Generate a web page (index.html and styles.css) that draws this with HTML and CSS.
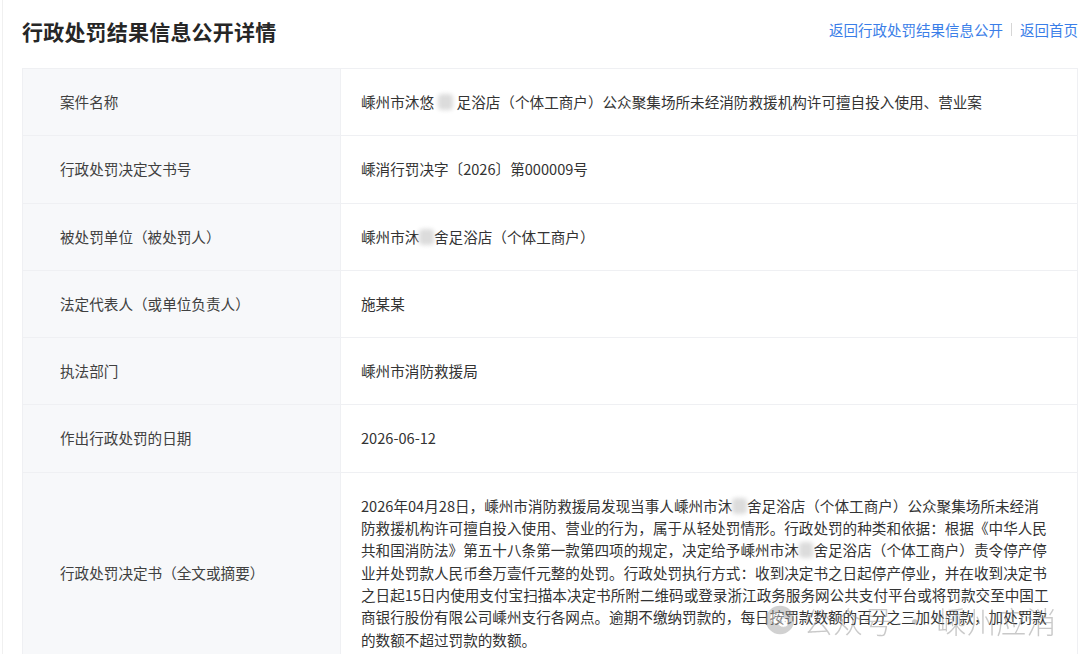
FILE: index.html
```html
<!DOCTYPE html>
<html lang="zh-CN">
<head>
<meta charset="utf-8">
<title>行政处罚结果信息公开详情</title>
<link rel="stylesheet" href="styles.css">
</head>
<body>
<div class="page">
  <div class="header">
    <h1 class="title">行政处罚结果信息公开详情</h1>
    <div class="links">
      <a class="link" href="#">返回行政处罚结果信息公开</a>
      <span class="sep"></span>
      <a class="link" href="#">返回首页</a>
    </div>
  </div>
  <table class="detail">
    <colgroup>
      <col class="col-label">
      <col class="col-value">
    </colgroup>
    <tr>
      <th class="label">案件名称</th>
      <td class="value">嵊州市沐悠<span class="blur wide"></span>足浴店（个体工商户）公众聚集场所未经消防救援机构许可擅自投入使用、营业案</td>
    </tr>
    <tr>
      <th class="label">行政处罚决定文书号</th>
      <td class="value">嵊消行罚决字〔2026〕第000009号</td>
    </tr>
    <tr>
      <th class="label">被处罚单位（被处罚人）</th>
      <td class="value">嵊州市沐<span class="blur"></span>舍足浴店（个体工商户）</td>
    </tr>
    <tr>
      <th class="label">法定代表人（或单位负责人）</th>
      <td class="value">施某某</td>
    </tr>
    <tr>
      <th class="label">执法部门</th>
      <td class="value">嵊州市消防救援局</td>
    </tr>
    <tr>
      <th class="label">作出行政处罚的日期</th>
      <td class="value">2026-06-12</td>
    </tr>
    <tr>
      <th class="label">行政处罚决定书（全文或摘要）</th>
      <td class="value para">2026年04月28日，嵊州市消防救援局发现当事人嵊州市沐<span class="blur"></span>舍足浴店（个体工商户）公众聚集场所未经消防救援机构许可擅自投入使用、营业的行为，属于从轻处罚情形。行政处罚的种类和依据：根据《中华人民共和国消防法》第五十八条第一款第四项的规定，决定给予嵊州市沐<span class="blur"></span>舍足浴店（个体工商户）责令停产停业并处罚款人民币叁万壹仟元整的处罚。行政处罚执行方式：收到决定书之日起停产停业，并在收到决定书之日起15日内使用支付宝扫描本决定书所附二维码或登录浙江政务服务网公共支付平台或将罚款交至中国工商银行股份有限公司嵊州支行各网点。逾期不缴纳罚款的，每日按罚款数额的百分之三加处罚款，加处罚款的数额不超过罚款的数额。</td>
    </tr>
  </table>
  <div class="watermark">
    <svg class="wm-icon" viewBox="0 0 40 40" width="30" height="30">
      <circle cx="20" cy="20" r="19" fill="#9a9a9a"/>
      <ellipse cx="16" cy="17" rx="9" ry="7.5" fill="#fff"/>
      <ellipse cx="24.5" cy="23.5" rx="7.5" ry="6.2" fill="#fff" stroke="#9a9a9a" stroke-width="1.2"/>
      <circle cx="13" cy="15" r="1.2" fill="#9a9a9a"/>
      <circle cx="19" cy="15" r="1.2" fill="#9a9a9a"/>
      <circle cx="22" cy="22" r="1" fill="#9a9a9a"/>
      <circle cx="27" cy="22" r="1" fill="#9a9a9a"/>
    </svg>
    <span class="wm-text">公众号 · 嵊州应消</span>
  </div>
</div>
</body>
</html>
```

FILE: styles.css
```css
html, body {
  margin: 0;
  padding: 0;
  background: #ffffff;
}

body {
  font-family: "Noto Sans CJK SC", "Noto Sans", "Liberation Sans", sans-serif;
  color: #333333;
  overflow: hidden;
  height: 654px;
}

.page {
  position: relative;
  margin-left: 2px;
  border-left: 1px solid #f0f0f0;
  padding: 0 2px 0 19px;
  height: 654px;
  box-sizing: border-box;
}

.header {
  display: flex;
  justify-content: space-between;
  align-items: center;
  height: 61px;
}

.title {
  margin: 0;
  font-size: 21px;
  font-weight: bold;
  color: #262626;
  letter-spacing: 0.2px;
}

.links {
  display: flex;
  align-items: center;
  gap: 8px;
  font-size: 14.5px;
  margin-top: -2px;
}

.link {
  color: #3a7ee8;
  text-decoration: none;
}

.sep {
  width: 1px;
  height: 13px;
  background: #d6d6d6;
}

.detail {
  margin-top: 7px;
  width: 1055px;
  table-layout: fixed;
  border-collapse: collapse;
  border: 1px solid #eff0f3;
  font-size: 14.6px;
  line-height: 22.3px;
}

.col-label {
  width: 318px;
}

.col-value {
  width: 737px;
}

.detail th,
.detail td {
  border: 1px solid #eff0f3;
  padding: 22px 20px;
  vertical-align: middle;
  text-align: left;
}

.label {
  padding-left: 37px !important;
  background: #f7f8fa;
  font-weight: normal;
  color: #404040;
}

.value {
  color: #333333;
  padding-right: 27px !important;
}

.blur {
  display: inline-block;
  width: 14.6px;
  height: 16px;
  margin-bottom: -2px;
  background: #dcdcdc;
  border-radius: 4px;
  filter: blur(2px);
}

.blur.wide {
  width: 14.6px;
  margin: 0 4px -2px 4px;
}

.watermark {
  position: absolute;
  left: 762px;
  top: 602px;
  display: flex;
  align-items: center;
  gap: 8px;
  opacity: 0.45;
  white-space: nowrap;
  pointer-events: none;
}

.wm-text {
  font-size: 30px;
  font-weight: 300;
  color: #8a8a8a;
  line-height: 36px;
}
```
